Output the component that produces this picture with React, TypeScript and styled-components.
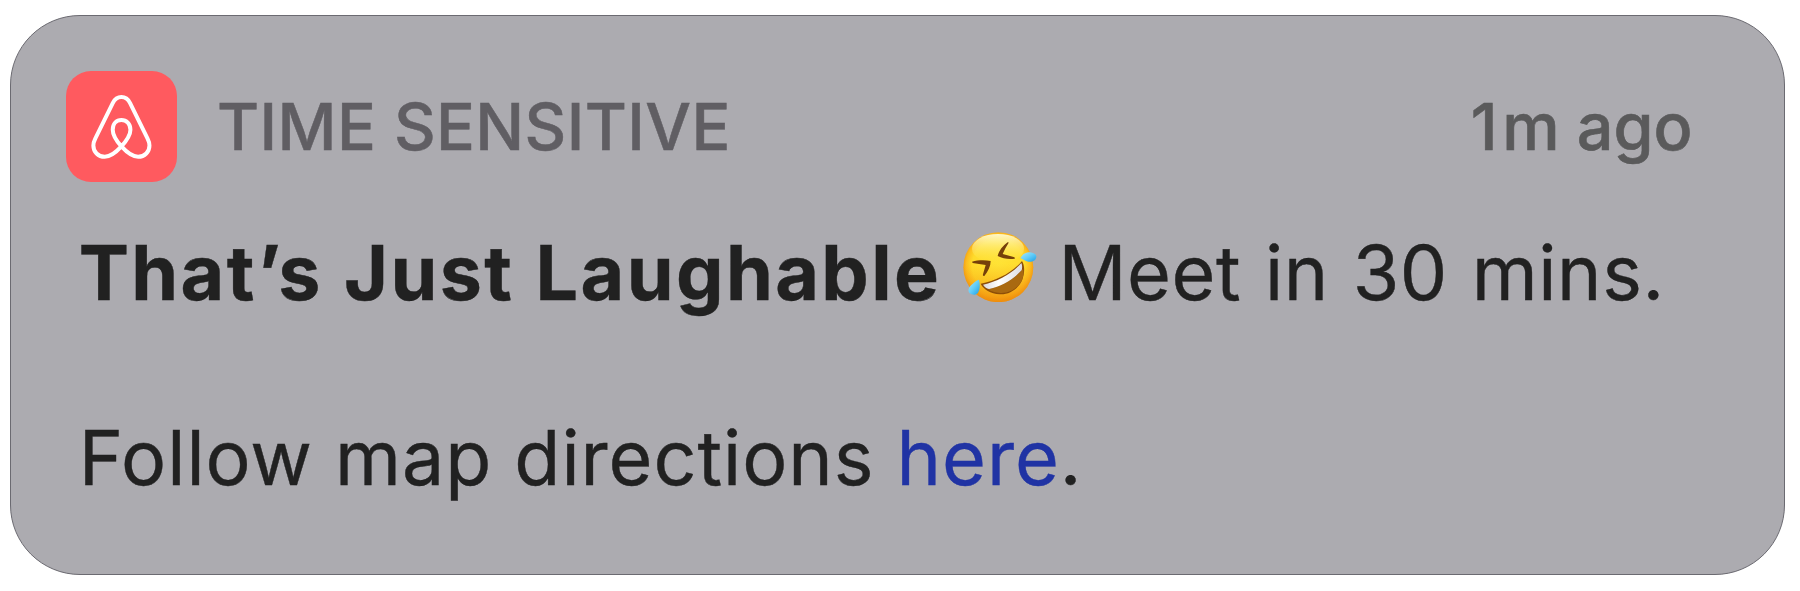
import React from "react";
import styled, { createGlobalStyle } from "styled-components";

const GlobalStyle = createGlobalStyle`
  *, *::before, *::after { box-sizing: border-box; }
  body {
    margin: 0;
    background: #fff;
    font-family: Inter, "Liberation Sans", sans-serif;
    font-feature-settings: "calt" 0;
  }
`;

const Page = styled.main`
  width: 1800px;
  height: 591px;
  padding: 15px 15px 16px 10px;
  display: flex;
`;

const Card = styled.article`
  flex: 1;
  display: flex;
  flex-direction: column;
  padding: 55px 91.5px 0 55px;
  border: 1px solid #6b6a71;
  border-radius: 70px;
  background: #acabb0;
  color: #212121;
`;

const Header = styled.header`
  display: flex;
  align-items: center;
  height: 111px;
`;

const AppIcon = styled.svg`
  flex: none;
  width: 111px;
  height: 111px;
  border-radius: 25px;
  background: #ff5a5f;
`;

const Label = styled.span`
  margin-left: 40px;
  font-size: 64.6px;
  font-weight: 500;
  line-height: 1.2;
  letter-spacing: 0.4px;
  color: #605e63;
  -webkit-text-stroke: 0.5px currentColor;
`;

const Time = styled.time`
  margin-left: auto;
  font-size: 64.6px;
  font-weight: 500;
  line-height: 1.2;
  color: #5a5a5b;
  -webkit-text-stroke: 0.6px currentColor;
`;

const Numeral = styled.span`
  letter-spacing: 4.7px;
`;

const Message = styled.div`
  display: flex;
  flex-direction: column;
  gap: 93px;
  margin-top: 45px;
  padding-left: 12.7px;
  font-size: 75.3px;
  line-height: 92px;
  white-space: nowrap;
`;

const Line = styled.p<{ $tracking: number; $wordGap: number }>`
  display: flex;
  align-items: center;
  margin: 0;
  height: 92px;
  letter-spacing: ${(p) => p.$tracking}px;
  word-spacing: ${(p) => p.$wordGap}px;
  white-space: pre;
  -webkit-text-stroke: 0.4px currentColor;
`;

const Title = styled.strong`
  font-weight: 700;
  letter-spacing: 2.4px;
  word-spacing: 1.1px;
`;

const Emoji = styled.svg`
  flex: none;
  width: 74px;
  height: 70.3px;
  margin: 0 21.3px 12px 21.8px;
`;

const Link = styled.a`
  color: #2033a4;
  text-decoration: none;
`;

function BrandIcon() {
  return (
    <AppIcon viewBox="20 17 332.5 332.5" fill="none" aria-hidden="true">
      <path
        d="M186 243C165 266 152 274 136 274C116 274 102 259 102 240C102 232 104 227 108 219L160 113C167 99 175 95 186 95C197 95 205 99 212 113L264 219C268 227 270 232 270 240C270 259 256 274 236 274C220 274 207 266 186 243C168 223 160 206 160 193C160 175 171 164 186 164C201 164 213 175 213 193C213 206 204 223 186 243Z"
        stroke="#fff"
        strokeWidth="12"
        strokeLinejoin="round"
      />
    </AppIcon>
  );
}

function LaughingFace() {
  return (
    <Emoji viewBox="41 35 222 211" role="img" aria-label="Rolling on the floor laughing">
      <defs>
        <radialGradient id="face" cx="0.5" cy="0.48" r="0.52">
          <stop offset="0" stopColor="#ffe336" />
          <stop offset="0.72" stopColor="#ffdb2b" />
          <stop offset="0.88" stopColor="#fcbd1e" />
          <stop offset="1" stopColor="#ef9412" />
        </radialGradient>
        <linearGradient id="shine" x1="0" y1="0" x2="0" y2="1">
          <stop offset="0" stopColor="#fffbd2" stopOpacity="0.95" />
          <stop offset="1" stopColor="#ffe94a" stopOpacity="0" />
        </linearGradient>
        <linearGradient id="shade" x1="0" y1="0" x2="0" y2="1">
          <stop offset="0.45" stopColor="#f59a12" stopOpacity="0" />
          <stop offset="1" stopColor="#ee8a0b" stopOpacity="0.75" />
        </linearGradient>
        <linearGradient id="teeth" x1="0" y1="0" x2="1" y2="0">
          <stop offset="0" stopColor="#d9d9e0" />
          <stop offset="0.4" stopColor="#ffffff" />
          <stop offset="1" stopColor="#dcdce2" />
        </linearGradient>
        <linearGradient id="tear" x1="0" y1="0" x2="1" y2="1">
          <stop offset="0" stopColor="#a6e6fb" />
          <stop offset="0.5" stopColor="#63cdf8" />
          <stop offset="1" stopColor="#1c9fe6" />
        </linearGradient>
      </defs>
      <g stroke="none">
        <circle cx="147" cy="140.5" r="105" fill="url(#face)" />
        <circle cx="147" cy="140.5" r="105" fill="url(#shade)" />
        <ellipse cx="146" cy="85" rx="78" ry="44" fill="url(#shine)" />
        <path d="M68 124C86 119 108 119 124 122C124 138 116 153 105 167C101 168 100 165 101 162L109 134C96 132 82 130 70 128Z" fill="#75400a" />
        <path d="M176 65C160 76 149 91 145 107C160 115 178 117 196 115C198 113 196 111 193 110L160 101C165 89 171 78 178 67Z" fill="#75400a" />
        <path d="M94 190C143 181 190 156 218 122C226 133 227 156 219 178C208 204 181 224 151 222C123 219 103 208 94 190Z" fill="#8d4e08" />
        <path d="M116 207C157 199 197 176 221 146C224 158 222 170 217 181C205 204 181 219 153 218C138 217 125 214 116 207Z" fill="#a96911" />
        <path d="M101 193C147 183 189 159 216 128C219 134 219 143 217 150C190 179 157 198 119 206C111 204 105 199 101 193Z" fill="url(#teeth)" />
        <path d="M213 113C220 101 231 95 242 96C253 97 262 102 261 110C260 121 248 126 237 124C227 122 221 117 213 113Z" fill="url(#tear)" />
        <path d="M89 178C93 193 92 208 86 217C80 225 69 225 61 219C55 212 57 203 65 195C72 188 80 180 89 178Z" fill="url(#tear)" />
      </g>
    </Emoji>
  );
}

export default function App() {
  return (
    <>
      <GlobalStyle />
      <Page>
        <Card>
          <Header>
            <BrandIcon />
            <Label>TIME SENSITIVE</Label>
            <Time>
              <Numeral>1</Numeral>m ago
            </Time>
          </Header>
          <Message>
            <Line $tracking={0.6} $wordGap={2}>
              <Title>That’s Just Laughable</Title>
              <LaughingFace />
              <span>Meet in 30 mins.</span>
            </Line>
            <Line $tracking={0.95} $wordGap={0}>
              <span>
                Follow map directions <Link href="#">here</Link>.
              </span>
            </Line>
          </Message>
        </Card>
      </Page>
    </>
  );
}
